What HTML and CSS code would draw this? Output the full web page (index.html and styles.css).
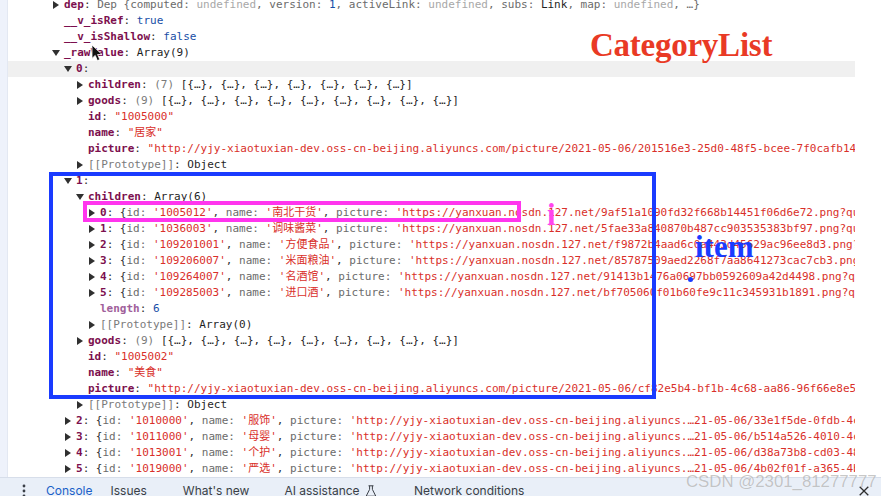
FILE: index.html
```html
<!DOCTYPE html>
<html lang="zh">
<head>
<meta charset="utf-8">
<title>DevTools console</title>
<link rel="stylesheet" href="styles.css">
</head>
<body>
<div class="shell">
  <div class="rail"></div>
  <div class="tree">
    <div class="row l1"><i class="tw r"></i><b>dep</b><s>: </s><span class="g">Dep {computed: </span><span class="u">undefined</span><span class="g">, version: </span><span class="n">1</span><span class="g">, activeLink: </span><span class="u">undefined</span><span class="g">, subs: </span><span class="k">Link</span><span class="g">, map: </span><span class="u">undefined</span><span class="g">, …}</span></div>
    <div class="row l1"><b>__v_isRef</b><s>: </s><span class="n">true</span></div>
    <div class="row l1"><b>__v_isShallow</b><s>: </s><span class="n">false</span></div>
    <div class="row l1"><i class="tw d"></i><b>_rawValue</b><s>: </s><span class="k">Array(9)</span></div>
    <div class="row l2 hl"><i class="tw d"></i><b>0</b><s>:</s></div>
    <div class="row l3"><i class="tw r"></i><b>children</b><s>: </s><span class="c">(7) </span><span class="k">[{…}, {…}, {…}, {…}, {…}, {…}, {…}]</span></div>
    <div class="row l3"><i class="tw r"></i><b>goods</b><s>: </s><span class="c">(9) </span><span class="k">[{…}, {…}, {…}, {…}, {…}, {…}, {…}, {…}, {…}]</span></div>
    <div class="row l3"><b>id</b><s>: </s><span class="t">"1005000"</span></div>
    <div class="row l3"><b>name</b><s>: </s><span class="t">"居家"</span></div>
    <div class="row l3"><b>picture</b><s>: </s><span class="t">"http://yjy-xiaotuxian-dev.oss-cn-beijing.aliyuncs.com/picture/2021-05-06/201516e3-25d0-48f5-bcee-7f0cafb14</span></div>
    <div class="row l3"><i class="tw r"></i><span class="p">[[Prototype]]</span><s>: </s><span class="k">Object</span></div>
    <div class="row l2"><i class="tw d"></i><b>1</b><s>:</s></div>
    <div class="row l3"><i class="tw d"></i><b>children</b><s>: </s><span class="k">Array(6)</span></div>
    <div class="row l4"><i class="tw r"></i><b>0</b><s>: {</s><span class="g">id: </span><span class="t">'1005012'</span><s>, </s><span class="g">name: </span><span class="t">'南北干货'</span><s>, </s><span class="g">picture: </span><span class="t">'https://yanxuan.nosdn.127.net/9af51a1090fd32f668b14451f06d6e72.png?qu</span></div>
    <div class="row l4"><i class="tw r"></i><b>1</b><s>: {</s><span class="g">id: </span><span class="t">'1036003'</span><s>, </s><span class="g">name: </span><span class="t">'调味酱菜'</span><s>, </s><span class="g">picture: </span><span class="t">'https://yanxuan.nosdn.127.net/5fae33a840870b487cc903535383bf97.png?qu</span></div>
    <div class="row l4"><i class="tw r"></i><b>2</b><s>: {</s><span class="g">id: </span><span class="t">'109201001'</span><s>, </s><span class="g">name: </span><span class="t">'方便食品'</span><s>, </s><span class="g">picture: </span><span class="t">'https://yanxuan.nosdn.127.net/f9872b4aad6c0a443d45629ac96ee8d3.png?</span></div>
    <div class="row l4"><i class="tw r"></i><b>3</b><s>: {</s><span class="g">id: </span><span class="t">'109206007'</span><s>, </s><span class="g">name: </span><span class="t">'米面粮油'</span><s>, </s><span class="g">picture: </span><span class="t">'https://yanxuan.nosdn.127.net/85787509aed2268f7aa8641273cac7cb3.png?</span></div>
    <div class="row l4"><i class="tw r"></i><b>4</b><s>: {</s><span class="g">id: </span><span class="t">'109264007'</span><s>, </s><span class="g">name: </span><span class="t">'名酒馆'</span><s>, </s><span class="g">picture: </span><span class="t">'https://yanxuan.nosdn.127.net/91413b1476a0697bb0592609a42d4498.png?q</span></div>
    <div class="row l4"><i class="tw r"></i><b>5</b><s>: {</s><span class="g">id: </span><span class="t">'109285003'</span><s>, </s><span class="g">name: </span><span class="t">'进口酒'</span><s>, </s><span class="g">picture: </span><span class="t">'https://yanxuan.nosdn.127.net/bf705060f01b60fe9c11c345931b1891.png?q</span></div>
    <div class="row l4"><b class="soft">length</b><s>: </s><span class="n">6</span></div>
    <div class="row l4"><i class="tw r"></i><span class="p">[[Prototype]]</span><s>: </s><span class="k">Array(0)</span></div>
    <div class="row l3"><i class="tw r"></i><b>goods</b><s>: </s><span class="c">(9) </span><span class="k">[{…}, {…}, {…}, {…}, {…}, {…}, {…}, {…}, {…}]</span></div>
    <div class="row l3"><b>id</b><s>: </s><span class="t">"1005002"</span></div>
    <div class="row l3"><b>name</b><s>: </s><span class="t">"美食"</span></div>
    <div class="row l3"><b>picture</b><s>: </s><span class="t">"http://yjy-xiaotuxian-dev.oss-cn-beijing.aliyuncs.com/picture/2021-05-06/cf82e5b4-bf1b-4c68-aa86-96f66e8e5</span></div>
    <div class="row l3"><i class="tw r"></i><span class="p">[[Prototype]]</span><s>: </s><span class="k">Object</span></div>
    <div class="row l2"><i class="tw r"></i><b>2</b><s>: {</s><span class="g">id: </span><span class="t">'1010000'</span><s>, </s><span class="g">name: </span><span class="t">'服饰'</span><s>, </s><span class="g">picture: </span><span class="t">'http://yjy-xiaotuxian-dev.oss-cn-beijing.aliyuncs.…21-05-06/33e1f5de-0fdb-4c</span></div>
    <div class="row l2"><i class="tw r"></i><b>3</b><s>: {</s><span class="g">id: </span><span class="t">'1011000'</span><s>, </s><span class="g">name: </span><span class="t">'母婴'</span><s>, </s><span class="g">picture: </span><span class="t">'http://yjy-xiaotuxian-dev.oss-cn-beijing.aliyuncs.…21-05-06/b514a526-4010-4c</span></div>
    <div class="row l2"><i class="tw r"></i><b>4</b><s>: {</s><span class="g">id: </span><span class="t">'1013001'</span><s>, </s><span class="g">name: </span><span class="t">'个护'</span><s>, </s><span class="g">picture: </span><span class="t">'http://yjy-xiaotuxian-dev.oss-cn-beijing.aliyuncs.…21-05-06/d38a73b8-cd03-48</span></div>
    <div class="row l2"><i class="tw r"></i><b>5</b><s>: {</s><span class="g">id: </span><span class="t">'1019000'</span><s>, </s><span class="g">name: </span><span class="t">'严选'</span><s>, </s><span class="g">picture: </span><span class="t">'http://yjy-xiaotuxian-dev.oss-cn-beijing.aliyuncs.…21-05-06/4b02f01f-a365-4b</span></div>
  </div>
</div>
<div class="drawer">
  <svg class="dots" width="4" height="14" viewBox="0 0 4 14"><circle cx="2" cy="2" r="1.4"/><circle cx="2" cy="7" r="1.4"/><circle cx="2" cy="12" r="1.4"/></svg>
  <span class="tab tab-active">Console</span>
  <span class="tab">Issues</span>
  <span class="tab tab-new">What's new</span>
  <span class="tab tab-ai">AI assistance
    <svg class="flask" width="12" height="12" viewBox="0 0 12 12"><path d="M3.5 .8h5M4.6 .8v3.6L1.2 11.2h9.6L7.4 4.4V.8"/></svg>
  </span>
  <span class="tab">Network conditions</span>
  <svg class="close" width="10" height="10" viewBox="0 0 10 10"><path d="M.7 .7l8.6 8.6M9.3 .7L.7 9.3"/></svg>
</div>

<div class="box box-item"></div>
<div class="box box-i"></div>
<div class="note note-list">CategoryList</div>
<div class="note note-i">i</div>
<div class="note note-item">item</div>
<div class="dot"></div>
<svg class="cursor" width="12" height="18" viewBox="0 0 12 18"><path d="M1 1v13.4l3.2-3 2.2 5.2 2.4-1-2.2-5.1h4.4z"/></svg>
<div class="mark">CSDN @2301_81277777</div>
</body>
</html>
```
FILE: styles.css
```css
* { box-sizing: border-box; }
html, body { margin: 0; height: 100%; overflow: hidden; background: #fff; }
body {
  position: relative;
  display: flex;
  flex-direction: column;
  width: 881px;
  height: 496px;
}

/* console tree */
.shell { display: flex; flex: 1; min-height: 0; overflow: hidden; }
.rail { width: 8px; background: #eef2fb; border-right: 1px solid #e3e8f2; }
.tree {
  width: 847px;
  margin-top: -3px;
  overflow: hidden;
  font: 11px/16px "DejaVu Sans Mono", "Noto Sans CJK SC", monospace;
  color: #303030;
}
.row { height: 16px; white-space: pre; overflow: hidden; }
.l1 { padding-left: 56px; }
.l2 { padding-left: 68px; }
.l3 { padding-left: 80px; }
.l4 { padding-left: 92px; }
.hl { background: #f0f0f0; }

.row b { color: #7c0f4e; font-weight: 700; }
.row b.soft { color: #a0609a; }
.row s { text-decoration: none; color: #303030; }
.g { color: #6b6b6b; }
.u { color: #a8a8a8; }
.n { color: #174ea6; }
.k { color: #1f1f1f; }
.c { color: #7a7a7a; }
.t { color: #d92f2a; }
.p { color: #7a7a7a; }

.tw { display: inline-block; width: 12px; margin-left: -12px; vertical-align: top; height: 16px; position: relative; }
.tw::before { content: ""; position: absolute; width: 0; height: 0; border-style: solid; }
.tw.r::before { left: 1px; top: 4px; border-width: 4px 0 4px 6px; border-color: transparent transparent transparent #303030; }
.tw.d::before { left: 0; top: 5px; border-width: 6px 4px 0 4px; border-color: #303030 transparent transparent transparent; }

/* bottom drawer */
.drawer {
  flex: none;
  height: 19px;
  display: flex;
  align-items: flex-start;
  padding-left: 22px;
  background: #e9eff8;
  border-top: 1px solid #d7deea;
  font: 12px/16px Inter, "Liberation Sans", sans-serif;
  color: #3a3f47;
  white-space: nowrap;
  overflow: hidden;
}
.dots { fill: #3a3f47; margin: 6px 20px 0 0; flex: none; }
.tab { padding-top: 5px; margin-right: 36px; }
.tab-active { color: #1a5fc8; margin-right: 18px; }
.tab-new { margin-right: 35px; }
.tab-ai { margin-right: 37px; }
.flask { fill: none; stroke: #3a3f47; stroke-width: 1; vertical-align: -2px; margin-left: 2px; }
.close { position: absolute; right: 12px; bottom: 0; fill: none; stroke: #2e2e2e; stroke-width: 1.3; }

/* hand-drawn annotations over the screenshot */
.box { position: absolute; }
.box-item { left: 49px; top: 172px; width: 607px; height: 227px; border: 4px solid #1a3bff; }
.box-i { left: 83px; top: 201px; width: 438px; height: 21px; border: 4px solid #ff35ee; }
.note { position: absolute; font-family: "Liberation Serif", serif; font-weight: 700; white-space: nowrap; }
.note-list { left: 590px; top: 26px; font-size: 33px; line-height: 38px; color: #e93a25; letter-spacing: -.25px; }
.note-i { left: 547px; top: 197px; font-size: 31px; line-height: 36px; color: #ff45ee; }
.note-item { left: 695px; top: 229px; font-size: 31px; line-height: 36px; color: #1a3bff; }
.dot { position: absolute; left: 688px; top: 277px; width: 5px; height: 5px; border-radius: 50%; background: #1a3bff; }
.cursor { position: absolute; left: 91px; top: 44px; fill: #111; stroke: #fff; stroke-width: .8; }
.mark {
  position: absolute;
  left: 686px;
  top: 472px;
  font: 16.8px/19px "Liberation Sans", sans-serif;
  color: rgba(120, 120, 120, .42);
  white-space: nowrap;
  text-shadow: 0 0 1px rgba(255, 255, 255, .7);
}
```
